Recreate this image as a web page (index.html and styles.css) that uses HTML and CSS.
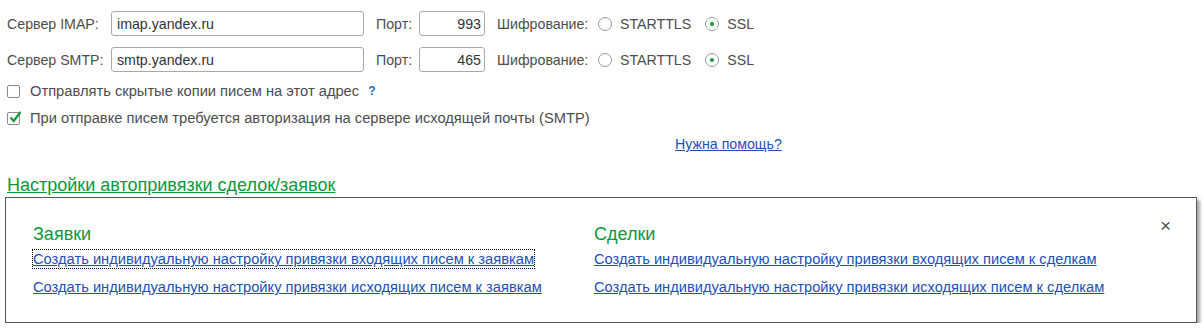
FILE: index.html
```html
<!DOCTYPE html>
<html lang="ru">
<head>
  <meta charset="UTF-8">
  <title>Настройки почты</title>
  <link rel="stylesheet" href="styles.css">
</head>
<body>
  <div class="page">
    <div class="server-row">
      <span class="label">Сервер IMAP:</span>
      <input class="host" type="text" value="imap.yandex.ru">
      <span class="label port-label">Порт:</span>
      <input class="port" type="text" value="993">
      <span class="label enc-label">Шифрование:</span>
      <span class="radio"></span><span class="opt">STARTTLS</span>
      <span class="radio checked"></span><span class="opt">SSL</span>
    </div>
    <div class="server-row">
      <span class="label">Сервер SMTP:</span>
      <input class="host" type="text" value="smtp.yandex.ru">
      <span class="label port-label">Порт:</span>
      <input class="port" type="text" value="465">
      <span class="label enc-label">Шифрование:</span>
      <span class="radio"></span><span class="opt">STARTTLS</span>
      <span class="radio checked"></span><span class="opt">SSL</span>
    </div>

    <div class="check-row">
      <span class="checkbox"></span>
      <span class="check-text">Отправлять скрытые копии писем на этот адрес</span>
      <span class="hint">?</span>
    </div>
    <div class="check-row">
      <span class="checkbox">
        <svg width="15" height="14" viewBox="0 0 15 14"><path d="M2.5 7.5 L5.8 11 L12.5 2" fill="none" stroke="#1a9b3c" stroke-width="2.3"/></svg>
      </span>
      <span class="check-text">При отправке писем требуется авторизация на сервере исходящей почты (SMTP)</span>
    </div>

    <div class="help-row"><a href="#" class="help">Нужна помощь?</a></div>

    <a href="#" class="section-title">Настройки автопривязки сделок/заявок</a>

    <div class="panel">
      <div class="panel-col">
        <div class="col-title">Заявки</div>
        <a href="#" class="link focused">Создать индивидуальную настройку привязки входящих писем к заявкам</a>
        <a href="#" class="link">Создать индивидуальную настройку привязки исходящих писем к заявкам</a>
      </div>
      <div class="panel-col">
        <div class="col-title">Сделки</div>
        <a href="#" class="link">Создать индивидуальную настройку привязки входящих писем к сделкам</a>
        <a href="#" class="link">Создать индивидуальную настройку привязки исходящих писем к сделкам</a>
      </div>
      <span class="close">&times;</span>
    </div>
  </div>
</body>
</html>
```

FILE: styles.css
```css
* {
  margin: 0;
  padding: 0;
  box-sizing: border-box;
}

body {
  font-family: Arial, "Liberation Sans", sans-serif;
  font-size: 14.2px;
  color: #4d4d4d;
  background-color: #fff;
}

.page {
  padding: 11px 0 0 7px;
  width: 1197px;
}

.server-row {
  display: flex;
  align-items: center;
  height: 25px;
  margin-bottom: 11px;
}

.label {
  white-space: nowrap;
}

.server-row > .label:first-child {
  width: 104px;
}

input {
  font-family: inherit;
  font-size: 14.2px;
  color: #333;
  height: 25px;
  border: 1px solid #a9a9a9;
  border-radius: 3px;
  padding: 0 5px;
  outline: none;
}

.host {
  width: 253px;
}

.port-label {
  margin-left: 12px;
  width: 43px;
}

.port {
  width: 66px;
  text-align: right;
  padding-right: 3px;
}

.enc-label {
  margin-left: 12px;
  width: 101px;
}

.radio {
  width: 14px;
  height: 14px;
  border: 1px solid #999;
  border-radius: 50%;
  position: relative;
  margin-right: 8px;
}

.radio.checked::after {
  content: "";
  position: absolute;
  left: 4px;
  top: 4px;
  width: 4px;
  height: 4px;
  border-radius: 50%;
  background-color: #1a9b3c;
}

.opt {
  margin-right: 14px;
}

.check-row {
  display: flex;
  align-items: center;
  height: 18px;
  margin-bottom: 9px;
  font-size: 14.7px;
}

.server-row + .check-row {
  margin-top: -1px;
}

.checkbox {
  width: 13px;
  height: 13px;
  border: 1px solid #8c8c8c;
  border-radius: 2px;
  margin-right: 10px;
  position: relative;
}

.checkbox svg {
  position: absolute;
  left: 0;
  top: -3px;
}

.hint {
  color: #1e6fc4;
  font-weight: bold;
  font-size: 12px;
  margin-left: 9px;
}

.help-row {
  padding-left: 668px;
  line-height: 17px;
  margin-top: 3px;
}

.help {
  color: #1e4fb4;
}

.section-title {
  display: inline-block;
  margin-top: 22px;
  font-size: 18px;
  color: #0a9a3a;
  text-decoration: underline;
  line-height: 21px;
}

.panel {
  position: relative;
  display: flex;
  margin-left: -2px;
  margin-top: 1px;
  height: 126px;
  border: 1px solid #555;
  box-shadow: 3px 3px 3px rgba(0, 0, 0, 0.35);
  padding: 25px 0 0 27px;
}

.panel-col {
  width: 561px;
  display: flex;
  flex-direction: column;
  align-items: flex-start;
}

.col-title {
  font-size: 18px;
  color: #0a9a3a;
  line-height: 22px;
  margin-bottom: 5px;
}

.link {
  color: #1e4fb4;
  font-size: 14.7px;
  line-height: 18px;
  margin-bottom: 10px;
}

.link.focused {
  outline: 1px dotted #000;
}

.close {
  position: absolute;
  right: 25px;
  top: 17px;
  font-size: 19px;
  color: #555;
}
```
